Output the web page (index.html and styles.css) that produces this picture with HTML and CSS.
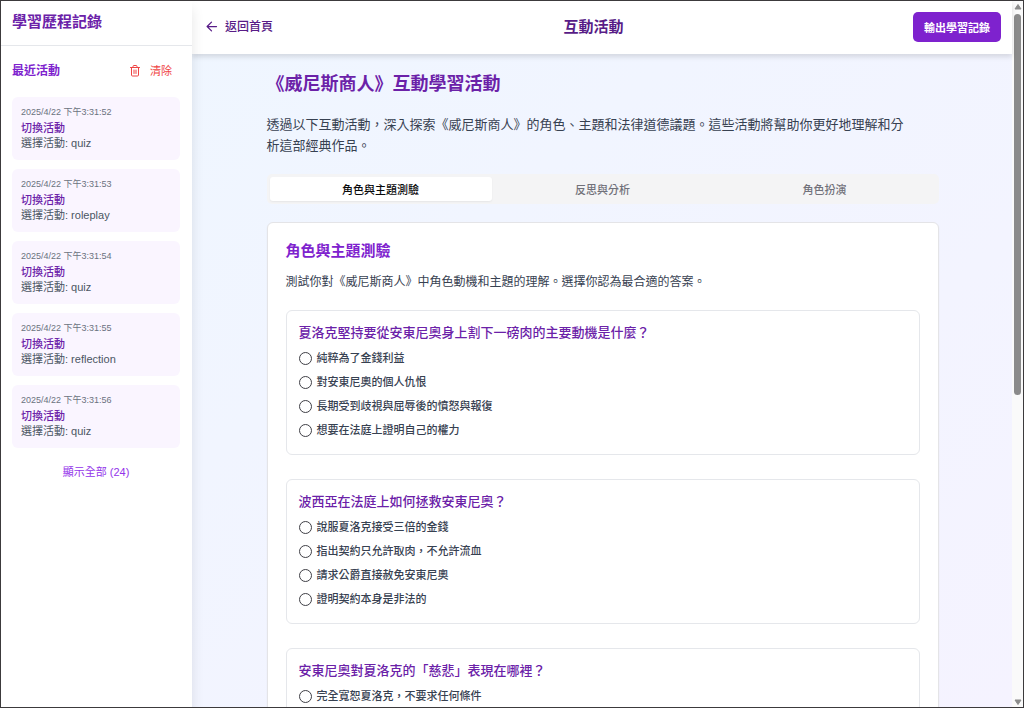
FILE: index.html
```html
<!DOCTYPE html>
<html lang="zh-Hant">
<head>
<meta charset="utf-8">
<meta name="viewport" content="width=device-width, initial-scale=1">
<title>互動活動</title>
<link rel="stylesheet" href="styles.css">
</head>
<body>
<div class="app">
  <aside class="sidebar">
    <h2 class="sidebar-title">學習歷程記錄</h2>
    <div class="sidebar-body">
      <div class="recent-head">
        <h3 class="recent-title">最近活動</h3>
        <button class="clear" type="button">
          <svg width="12" height="12" viewBox="0 0 24 24" fill="none" stroke="currentColor" stroke-width="2" stroke-linecap="round" stroke-linejoin="round" aria-hidden="true"><path d="M3 5h18M19 5v15a2 2 0 0 1-2 2H7a2 2 0 0 1-2-2V5M8 5V3a2 2 0 0 1 2-2h4a2 2 0 0 1 2 2v2M10 10v7M14 10v7"/></svg>
          清除
        </button>
      </div>
      <ul class="log">
        <li class="entry"><time class="time">2025/4/22 下午3:31:52</time><p class="action">切換活動</p><p class="detail">選擇活動: quiz</p></li>
        <li class="entry"><time class="time">2025/4/22 下午3:31:53</time><p class="action">切換活動</p><p class="detail">選擇活動: roleplay</p></li>
        <li class="entry"><time class="time">2025/4/22 下午3:31:54</time><p class="action">切換活動</p><p class="detail">選擇活動: quiz</p></li>
        <li class="entry"><time class="time">2025/4/22 下午3:31:55</time><p class="action">切換活動</p><p class="detail">選擇活動: reflection</p></li>
        <li class="entry"><time class="time">2025/4/22 下午3:31:56</time><p class="action">切換活動</p><p class="detail">選擇活動: quiz</p></li>
      </ul>
      <button class="show-all" type="button">顯示全部 (24)</button>
    </div>
  </aside>

  <div class="page">
    <header class="topbar">
      <a class="back" href="#">
        <svg width="15" height="15" viewBox="0 0 24 24" fill="none" stroke="currentColor" stroke-width="2" stroke-linecap="round" stroke-linejoin="round" aria-hidden="true"><path d="m12 19-7-7 7-7M20 12H5"/></svg>
        返回首頁
      </a>
      <h1 class="topbar-title">互動活動</h1>
      <button class="export" type="button">輸出學習記錄</button>
    </header>

    <main class="content">
      <h2 class="title">《威尼斯商人》互動學習活動</h2>
      <p class="intro">透過以下互動活動，深入探索《威尼斯商人》的角色、主題和法律道德議題。這些活動將幫助你更好地理解和分析這部經典作品。</p>

      <div class="tabs" role="tablist">
        <button class="tab tab-active" type="button" role="tab" aria-selected="true">角色與主題測驗</button>
        <button class="tab" type="button" role="tab" aria-selected="false">反思與分析</button>
        <button class="tab" type="button" role="tab" aria-selected="false">角色扮演</button>
      </div>

      <section class="card">
        <h3 class="card-title">角色與主題測驗</h3>
        <p class="card-text">測試你對《威尼斯商人》中角色動機和主題的理解。選擇你認為最合適的答案。</p>
        <div class="questions">
          <div class="question" role="radiogroup" aria-labelledby="q1">
            <h4 class="question-title" id="q1">夏洛克堅持要從安東尼奧身上割下一磅肉的主要動機是什麼？</h4>
            <label class="option"><input class="radio" type="radio" name="q1">純粹為了金錢利益</label>
            <label class="option"><input class="radio" type="radio" name="q1">對安東尼奧的個人仇恨</label>
            <label class="option"><input class="radio" type="radio" name="q1">長期受到歧視與屈辱後的憤怒與報復</label>
            <label class="option"><input class="radio" type="radio" name="q1">想要在法庭上證明自己的權力</label>
          </div>
          <div class="question" role="radiogroup" aria-labelledby="q2">
            <h4 class="question-title" id="q2">波西亞在法庭上如何拯救安東尼奧？</h4>
            <label class="option"><input class="radio" type="radio" name="q2">說服夏洛克接受三倍的金錢</label>
            <label class="option"><input class="radio" type="radio" name="q2">指出契約只允許取肉，不允許流血</label>
            <label class="option"><input class="radio" type="radio" name="q2">請求公爵直接赦免安東尼奧</label>
            <label class="option"><input class="radio" type="radio" name="q2">證明契約本身是非法的</label>
          </div>
          <div class="question" role="radiogroup" aria-labelledby="q3">
            <h4 class="question-title" id="q3">安東尼奧對夏洛克的「慈悲」表現在哪裡？</h4>
            <label class="option"><input class="radio" type="radio" name="q3">完全寬恕夏洛克，不要求任何條件</label>
          </div>
        </div>
      </section>
    </main>
  </div>

  <div class="scrollbar" aria-hidden="true">
    <svg width="8" height="6" viewBox="0 0 8 6"><path d="M4 0.5 7 5H1z" fill="#8b8b8b" stroke="#8b8b8b" stroke-linejoin="round"/></svg>
    <div class="track"><div class="thumb"></div></div>
    <svg width="8" height="6" viewBox="0 0 8 6"><path d="M1 1h6L4 5.5z" fill="#8b8b8b" stroke="#8b8b8b" stroke-linejoin="round"/></svg>
  </div>
</div>
</body>
</html>
```

FILE: styles.css
```css
* {
  box-sizing: border-box;
  margin: 0;
  padding: 0;
}

body {
  font-family: "Liberation Sans", "Noto Sans CJK TC", sans-serif;
  color: #1f2937;
}

button {
  font: inherit;
  border: 0;
  background: none;
  cursor: pointer;
}

.app {
  display: flex;
  height: 100vh;
  overflow: hidden;
  border: 1px solid #3c3a3c;
  background: #fff;
}

/* Sidebar */
.sidebar {
  position: relative;
  z-index: 2;
  flex: 0 0 191px;
  background: #fff;
  box-shadow: 0 8px 12px rgba(0, 0, 0, 0.1);
}

.sidebar-title {
  padding: 10px 11px 12px;
  border-bottom: 1px solid #e5e7eb;
  font-size: 15px;
  line-height: 22px;
  font-weight: 700;
  color: #6b21a8;
}

.sidebar-body {
  display: flex;
  flex-direction: column;
  padding: 12px 12px 12px 11px;
}

.recent-head {
  display: flex;
  align-items: center;
  justify-content: space-between;
  height: 26px;
  margin-bottom: 13px;
}

.recent-title {
  font-size: 12px;
  line-height: 18px;
  font-weight: 700;
  color: #7e22ce;
}

.clear {
  display: flex;
  align-items: center;
  gap: 9px;
  padding: 0 8px;
  font-size: 11px;
  line-height: 16px;
  color: #ef4444;
}

.log {
  display: flex;
  flex-direction: column;
  gap: 9px;
  list-style: none;
}

.entry {
  padding: 9px;
  border-radius: 6px;
  background: #faf5ff;
  font-size: 11px;
  line-height: 15px;
}

.time {
  display: block;
  margin-bottom: 3px;
  font-size: 9px;
  line-height: 12px;
  color: #6b7280;
}

.action {
  font-weight: 500;
  color: #6b21a8;
}

.detail {
  color: #4b5563;
}

.show-all {
  margin-top: 12px;
  height: 24px;
  font-size: 11px;
  line-height: 15px;
  color: #9333ea;
}

/* Page */
.page {
  flex: 1;
  min-width: 0;
  display: flex;
  flex-direction: column;
  background: linear-gradient(to bottom right, #eff6ff, #f5f3ff);
}

.topbar {
  position: relative;
  z-index: 1;
  flex: none;
  display: grid;
  grid-template-columns: 1fr auto 1fr;
  align-items: center;
  height: 53px;
  padding: 0 11px 2px 12px;
  background: #fff;
  box-shadow: 0 3px 5px rgba(0, 0, 0, 0.12);
}

.back {
  display: flex;
  align-items: center;
  gap: 6px;
  font-size: 12px;
  line-height: 18px;
  font-weight: 500;
  color: #581c87;
  text-decoration: none;
}

.topbar-title {
  padding-right: 18px;
  font-size: 15px;
  line-height: 21px;
  font-weight: 700;
  color: #581c87;
}

.export {
  justify-self: end;
  height: 30px;
  padding: 0 11px;
  border-radius: 5px;
  background: #7e22ce;
  font-size: 11px;
  font-weight: 700;
  color: #fff;
}

.content {
  flex: 1;
  min-height: 0;
  width: 100%;
  max-width: 697px;
  margin: 0 auto;
  padding: 18px 12px 0 13px;
  overflow: hidden;
}

.title {
  margin-bottom: 18px;
  font-size: 18px;
  line-height: 24px;
  font-weight: 700;
  color: #6b21a8;
}

.intro {
  margin-bottom: 18px;
  padding-right: 24px;
  font-size: 13px;
  line-height: 21px;
  color: #374151;
}

.tabs {
  display: grid;
  grid-template-columns: repeat(3, 1fr);
  margin-bottom: 18px;
  padding: 3px;
  border-radius: 5px;
  background: #f4f4f5;
}

.tab {
  height: 24px;
  border-radius: 3px;
  font-size: 11px;
  font-weight: 500;
  color: #71717a;
}

.tab-active {
  background: #fff;
  color: #09090b;
  box-shadow: 0 1px 2px rgba(0, 0, 0, 0.06);
}

.card {
  padding: 18px;
  border: 1px solid #e4e4e7;
  border-radius: 6px;
  background: #fff;
  box-shadow: 0 1px 2px rgba(0, 0, 0, 0.06);
}

.card-title {
  margin-bottom: 12px;
  font-size: 15px;
  line-height: 20px;
  font-weight: 700;
  color: #7e22ce;
}

.card-text {
  margin-bottom: 19px;
  font-size: 12px;
  line-height: 18px;
  color: #374151;
}

.questions {
  display: flex;
  flex-direction: column;
  gap: 24px;
}

.question {
  padding: 12px;
  border: 1px solid #e5e7eb;
  border-radius: 6px;
}

.question-title {
  margin-bottom: 3px;
  font-size: 13px;
  line-height: 20px;
  font-weight: 500;
  color: #6b21a8;
}

.option {
  display: flex;
  align-items: center;
  gap: 5px;
  height: 24px;
  font-size: 11px;
  line-height: 15px;
  font-weight: 500;
  color: #374151;
}

.radio {
  appearance: none;
  flex: none;
  width: 13px;
  height: 13px;
  border: 1px solid #3f3f46;
  border-radius: 50%;
  background: #fff;
}

.radio:checked {
  border: 4px solid #7e22ce;
}

/* Scroll indicator */
.scrollbar {
  flex: 0 0 11px;
  display: flex;
  flex-direction: column;
  align-items: center;
  gap: 4px;
  padding: 3px 1px 2px;
  background: #fafafa;
}

.track {
  flex: 1;
}

.thumb {
  width: 7px;
  height: 56%;
  border-radius: 4px;
  background: #8b8b8b;
}
```
